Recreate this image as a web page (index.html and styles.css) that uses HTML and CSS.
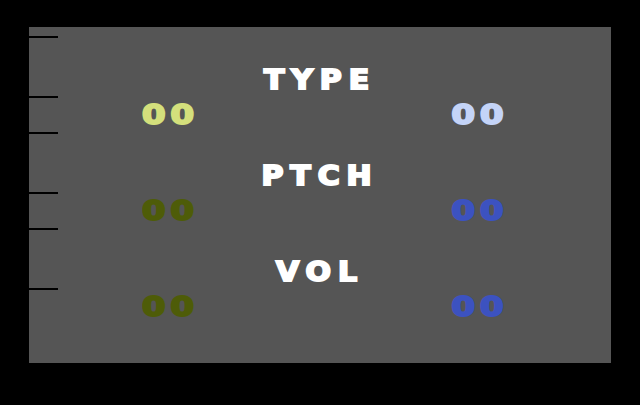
FILE: index.html
```html
<html>
	<head>
		<title>Sound Editor</title>
		<meta charset="utf-8"/>
		<link rel="stylesheet" href="styles.css">
	</head>
	<body>
		<div id="screen">
			<div class="ticks">
				<span class="tick long"></span>
				<span class="tick"></span>
				<span class="tick long"></span>
				<span class="tick"></span>
				<span class="tick long"></span>
				<span class="tick"></span>
			</div>
			<div class="row">
				<p class="label">TYPE</p>
				<div class="vals">
					<span class="num left lit">00</span>
					<span class="num right lit">00</span>
				</div>
			</div>
			<div class="row">
				<p class="label">PTCH</p>
				<div class="vals">
					<span class="num left">00</span>
					<span class="num right">00</span>
				</div>
			</div>
			<div class="row">
				<p class="label">VOL</p>
				<div class="vals">
					<span class="num left">00</span>
					<span class="num right">00</span>
				</div>
			</div>
		</div>
	</body>
</html>
```

FILE: styles.css
```css
body {
	background-color: black;
	margin: 0;
	padding-top: 27px;
	padding-left: 29px;
}

#screen {
	background-color: #555555;
	width: 582px;
	height: 336px;
	padding-top: 40px;
	box-sizing: border-box;
	position: relative;
}

/* marker lines down the left edge */
.ticks {
	position: absolute;
	left: 0;
	top: 9px;
	display: flex;
	flex-direction: column;
}

.tick {
	display: block;
	width: 29px;
	height: 2px;
	background-color: black;
	margin-bottom: 34px;
}

.tick.long {
	margin-bottom: 58px;
}

.row {
	margin-bottom: 36px;
}

.label {
	margin: 0;
	height: 26px;
	line-height: 26px;
	text-align: center;
	font-family: "DejaVu Sans", sans-serif;
	font-weight: bold;
	font-size: 26px;
	letter-spacing: 6px;
	-webkit-text-stroke: 2px white;
	color: white;
	transform: scaleX(1.15);
}

.vals {
	margin-top: 8px;
	display: flex;
	justify-content: space-between;
	padding-left: 113px;
	padding-right: 109px;
}

.num {
	display: inline-block;
	height: 26px;
	line-height: 28px;
	font-family: "DejaVu Sans", sans-serif;
	font-weight: bold;
	font-size: 27px;
	letter-spacing: 4px;
	-webkit-text-stroke: 2px;
	transform: scaleX(1.25);
}

.num.left {
	color: #4e5c08;
	transform-origin: left;
}

.num.right {
	color: #3c52c0;
	margin-right: -7px;
	transform-origin: right;
}

.num.left.lit {
	color: #d4e07c;
}

.num.right.lit {
	color: #c4d4f8;
}
```
